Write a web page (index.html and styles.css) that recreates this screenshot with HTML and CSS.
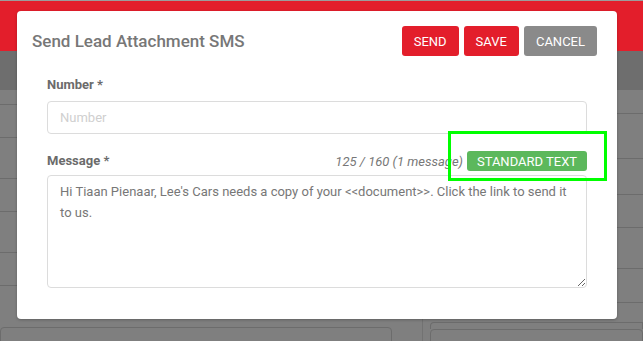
FILE: index.html
```html
<!DOCTYPE html>
<html>
  <head>
    <meta charset="utf-8">
    <title>Send Lead Attachment SMS</title>
    <link rel="stylesheet" href="styles.css">
  </head>
  <body>
    <div class="page">
      <div class="topbar"></div>
      <div class="subbar"></div>
      <div class="main">
        <div class="col-left">
          <div class="row" style="height:15px"></div>
          <div class="row" style="height:33px"></div>
          <div class="row" style="height:41px"></div>
          <div class="row" style="height:33px"></div>
          <div class="row" style="height:41px"></div>
          <div class="row" style="height:33px"></div>
          <div class="spacer" style="height:41px"></div>
          <div class="card"></div>
        </div>
        <div class="divider"></div>
        <div class="col-right">
          <div class="row" style="height:24px"></div>
          <div class="row" style="height:45px"></div>
          <div class="row" style="height:36px"></div>
          <div class="row" style="height:33px"></div>
          <div class="row" style="height:41px"></div>
          <div class="row" style="height:34px"></div>
          <div class="spacer" style="height:19px"></div>
          <div class="card short"></div>
          <div class="card"></div>
        </div>
      </div>

      <div class="modal">
        <div class="modal-header">
          <h2 class="modal-title">Send Lead Attachment SMS</h2>
          <div class="actions">
            <button class="btn btn-red">SEND</button>
            <button class="btn btn-red">SAVE</button>
            <button class="btn btn-grey">CANCEL</button>
          </div>
        </div>
        <div class="modal-body">
          <label class="field-label">Number *</label>
          <input class="input" type="text" placeholder="Number">

          <div class="message-row">
            <label class="field-label">Message *</label>
            <span class="counter">125 / 160 (1 message)</span>
            <button class="btn-std">STANDARD TEXT</button>
          </div>
          <textarea class="textarea">Hi Tiaan Pienaar, Lee's Cars needs a copy of your &lt;&lt;document&gt;&gt;. Click the link to send it to us.</textarea>
        </div>
      </div>

      <div class="highlight"></div>
    </div>
  </body>
</html>
```

FILE: styles.css
```css
html, body {
  margin: 0;
  padding: 0;
}
body {
  background: #7f7f7f;
  font-family: Roboto, "Liberation Sans", sans-serif;
}
.page {
  position: relative;
  width: 643px;
  height: 341px;
  overflow: hidden;
}
.topbar {
  height: 50px;
  background: #e31e2b;
  border-top: 1px solid #9c9c9c;
}
.subbar {
  height: 39px;
  background: #6e6e6e;
}
.main {
  display: flex;
  height: 251px;
}
.col-left {
  width: 392px;
}
.divider {
  width: 1px;
  margin-left: 30px;
  background: #727272;
}
.col-right {
  flex: 1;
  margin-left: 7px;
}
.row {
  box-sizing: border-box;
  border-bottom: 1px solid #6c6c6c;
}
.card {
  height: 40px;
  border: 1px solid #6c6c6c;
  border-radius: 4px;
}
.card.short {
  height: 6px;
  border-bottom: 0;
  border-radius: 4px 0 0 0;
}

/* modal */
.modal {
  position: absolute;
  left: 17px;
  top: 11px;
  width: 600px;
  height: 308px;
  box-sizing: border-box;
  background: #fff;
  border-radius: 4px;
  box-shadow: 0 1px 3px rgba(0, 0, 0, 0.25);
}
.modal-header {
  display: flex;
  align-items: center;
  justify-content: space-between;
  padding: 15px 20px 0 15px;
}
.modal-title {
  margin: 0;
  font-size: 17px;
  font-weight: 500;
  color: #777;
}
.actions {
  display: flex;
  gap: 5px;
}
.btn {
  height: 30px;
  padding: 0 12px;
  border: 0;
  border-radius: 3px;
  color: #fff;
  font-family: Roboto, "Liberation Sans", sans-serif;
  font-size: 13px;
}
.btn-red {
  background: #e31e2b;
}
.btn-grey {
  background: #8a8a8a;
}
.modal-body {
  display: flex;
  flex-direction: column;
  padding: 20px 30px 31px;
}
.field-label {
  font-size: 13px;
  line-height: 18px;
  font-weight: 700;
  color: #6b6b6b;
}
.input {
  margin-top: 7px;
  height: 33px;
  box-sizing: border-box;
  padding: 0 12px;
  border: 1px solid #dcdcdc;
  border-radius: 4px;
  font-family: Roboto, "Liberation Sans", sans-serif;
  font-size: 13px;
}
.input::placeholder {
  color: #cfcfcf;
}
.message-row {
  display: flex;
  align-items: center;
  height: 20px;
  margin-top: 17px;
}
.message-row .field-label {
  flex: 1;
}
.counter {
  font-size: 13px;
  font-style: italic;
  color: #777;
  margin-right: 4px;
}
.btn-std {
  width: 120px;
  height: 20px;
  padding: 0;
  border: 0;
  border-radius: 3px;
  background: #5cb85c;
  color: #fff;
  font-family: Roboto, "Liberation Sans", sans-serif;
  font-size: 13px;
}
.textarea {
  margin-top: 4px;
  height: 113px;
  box-sizing: border-box;
  padding: 5px 12px;
  border: 1px solid #dcdcdc;
  border-radius: 4px;
  resize: vertical;
  font-family: Roboto, "Liberation Sans", sans-serif;
  font-size: 13px;
  line-height: 21px;
  color: #777;
}

/* annotation box */
.highlight {
  position: absolute;
  left: 448px;
  top: 131px;
  width: 153px;
  height: 44px;
  border: 3px solid #00ff00;
}
```
